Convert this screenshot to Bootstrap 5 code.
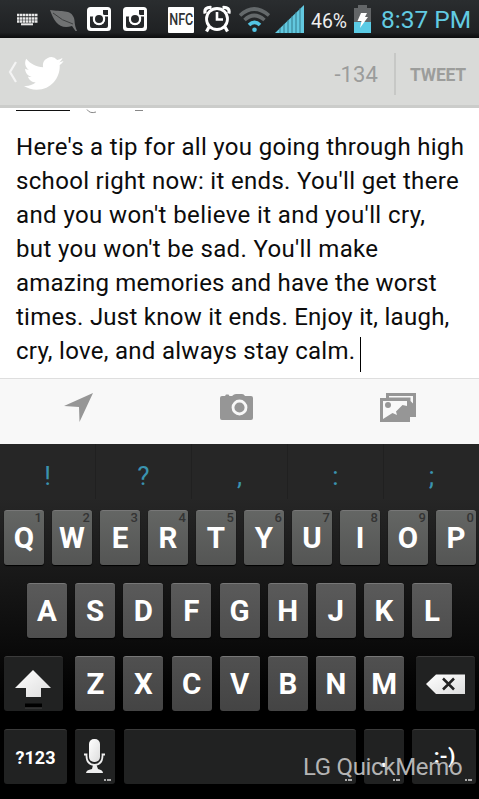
<!DOCTYPE html>
<html lang="en">
<head>
<meta charset="utf-8">
<meta name="viewport" content="width=device-width, initial-scale=1">
<title>Compose Tweet</title>
<link href="https://cdn.jsdelivr.net/npm/bootstrap@5.3.0/dist/css/bootstrap.min.css" rel="stylesheet">
<style>
body{font-family:Roboto,"Noto Sans",sans-serif;background:#fff}
svg{display:block;flex:none}
.phone{width:479px;height:799px}
.status{height:38px;background:linear-gradient(#2a2d2f,#1f2123 85%,#0b0c0d);padding-left:16px}
.ic-leaf{margin-left:11px}.ic-insta{margin-left:9px}.ic-insta2{margin-left:12px}
.nfc{width:26px;height:26px;margin-left:21px;background:#fff;color:#303234;border-radius:1px;font-size:17px;font-weight:500;margin-top:1px}
.nfc span{transform:scaleX(.74)}
.ic-alarm{margin-left:9px}.ic-wifi{margin-left:8px}.ic-signal{margin-left:5px}
.pct{width:36px;margin-left:7px;font-size:20px;line-height:38px;color:#eee;margin-top:3px}
.pct span{display:inline-block;transform-origin:0 50%;transform:scaleX(.97)}
.ic-batt{margin-left:7px}
.clock{margin-left:10px;font-size:24.5px;line-height:38px;color:#62cbe2;margin-top:2px}
.appbar{height:70px;background:#d9dad8;border-bottom:3px solid #cbccca}
.back{margin-left:7px}.bird{margin-left:6px}
.count{font-size:22px;color:#9b9c9b;margin-top:6px;letter-spacing:.1px}
.rule{width:2px;height:42px;background:#c7c8c6;margin:4px 14px 0 16px}
.tweet{font-size:17.5px;font-weight:700;color:#9c9d9b;margin:7px 13px 0 0;width:56px;letter-spacing:-.2px}
.compose{height:270px;padding:0 0 0 16px;overflow:hidden}
.reply{height:21.5px}
.msg{font-size:24px;line-height:34px;color:#0c0c0c;white-space:nowrap}
.msg div{height:34px}
.l1{letter-spacing:.31px}.l2{letter-spacing:.32px}.l3{letter-spacing:.4px}.l4{letter-spacing:.35px}.l5{letter-spacing:.22px}.l6{letter-spacing:.25px}.l7{letter-spacing:.28px}
.caret{display:inline-block;width:1px;height:35px;background:#000;margin-left:5px;vertical-align:-13px}
.tools{height:66px;background:#f8f8f8;border-top:1px solid #dedede;padding-top:13px}
.ic-loc{margin-left:64px}.ic-cam{margin-left:127px}.ic-pic{margin-left:127px}
.keyboard{height:355px;background:linear-gradient(#262626 0,#262626 55px,#000 260px)}
.suggest{height:55px;font-size:26px;line-height:55px;color:#3a93af}
.suggest div{width:96px;text-align:center;flex:none;padding:5px 1px 0 0;box-shadow:inset -1px 0 #202020}
.krow{height:55px;margin-bottom:18px;gap:8px}
.first{margin-top:11px}
.r1,.r4{padding-left:4px}.r2{padding-left:27px;gap:8.130px}.r3 .letters{gap:8.150px;padding-left:.5px}
.key{position:relative;width:40px;height:55px;border-radius:3px;color:#fff;font-weight:700;font-size:29.5px;background:#555;border-top:1px solid #777;flex:none;padding-top:1px;box-shadow:0 1px 1px #000}
.r1 .key{background:linear-gradient(#646664,#545554)}
.r2 .key{background:linear-gradient(#5a5a5a,#4e4e4e)}
.r3 .key{background:linear-gradient(#505050,#444)}
.r3 .dark,.r4 .key{background:#212222;border-top-color:#3b3b3b}
.r2 .key,.r3 .letters .key{padding-top:0}
.key small{position:absolute;top:0;right:2px;font-size:13px;line-height:14px;font-weight:500;color:#343434}
.r4 .k-num{font-size:18px}
.k-wide{width:59px}.k-num{width:63px}.k-space{width:232px}.k-smile{width:64px}
.r4 .k-smile{font-size:21px;padding:0 0 0 1px}
.mic{margin-right:1px}
.dots::after{content:"";position:absolute;right:4px;bottom:3px;width:7px;height:2px;background:repeating-linear-gradient(90deg,#aaa 0 2px,transparent 2px 2.5px)}
.memo{position:absolute;left:303px;top:751px;font-size:24px;line-height:32px;color:#b4b4b4;white-space:nowrap;letter-spacing:-.32px}
</style>
</head>
<body>
<main class="phone position-relative overflow-hidden">
<header class="status d-flex align-items-center">
<svg width="23" height="38"><path d="M1 15H22M1 18.500H22M1 21.500H22" stroke="#e8e8e8" stroke-width="2.300" stroke-dasharray="2.500 .5"/><path d="M5 24.300H17" stroke="#e8e8e8" stroke-width="2"/></svg>
<svg class="ic-leaf" width="28" height="38"><path d="M0 10C11 12 21 9 24 18C25 21 24 24 27 31L25.500 31L22 26C10 30 4 22 0 10Z" fill="#707273"/><path d="M3 13Q12 21 23 24" fill="none" stroke="#3d3f40"/></svg>
<svg class="ic-insta" width="24" height="38"><rect y="7" width="24" height="24" rx="3.500" fill="#fff"/><rect x="16" y="10" width="5" height="5" fill="#26282a"/><path d="M3 16.500H6.500A6 6 0 1 0 17.500 16.500H21V26a2 2 0 0 1-2 2H5a2 2 0 0 1-2-2Z" fill="#26282a"/><circle cx="12" cy="19" r="6.200" fill="#fff"/><circle cx="12" cy="19" r="4" fill="#26282a"/></svg>
<svg class="ic-insta2" width="24" height="38"><rect y="7" width="24" height="24" rx="3.500" fill="#fff"/><rect x="16" y="10" width="5" height="5" fill="#26282a"/><path d="M3 16.500H6.500A6 6 0 1 0 17.500 16.500H21V26a2 2 0 0 1-2 2H5a2 2 0 0 1-2-2Z" fill="#26282a"/><circle cx="12" cy="19" r="6.200" fill="#fff"/><circle cx="12" cy="19" r="4" fill="#26282a"/></svg>
<div class="nfc d-flex align-items-center justify-content-center"><span>NFC</span></div>
<svg class="ic-alarm" width="28" height="38" fill="none" stroke="#fff"><circle cx="14" cy="19" r="10.500" stroke-width="2.800"/><path d="M14 12V19.500H20" stroke-width="2.600"/><path d="M2.200 13.500Q.5 7 8.500 7.500M25.800 13.500Q27.500 7 19.500 7.500" stroke-width="3.200"/><path d="M6 27L3.500 31.500M22 27L24.500 31.500" stroke-width="3.200"/></svg>
<svg class="ic-wifi" width="31" height="38" fill="none"><path d="M1 15.500Q15 2.500 30 15.500" stroke="#64696b" stroke-width="3.600"/><path d="M5.500 20Q15 11 25.500 20" stroke="#64696b" stroke-width="3.600"/><path d="M10 25Q15.500 19.500 21 25" stroke="#52c4e4" stroke-width="3.600"/><circle cx="15.500" cy="29.700" r="2.300" fill="#52c4e4"/></svg>
<svg class="ic-signal" width="29" height="38" fill="#62c8df"><path d="M0 33L29 5V33Z"/><path d="M5 28V33M9 24V33M13 20V33M17 16V33M21 12V33M25 8V33" stroke="#2f7285" stroke-width=".9"/></svg>
<div class="pct"><span>46%</span></div>
<svg class="ic-batt" width="17" height="38"><path d="M4 5H13V8H17V22H0V8H4Z" fill="#636668"/><path d="M0 22H17V33H0Z" fill="#5bcbe5"/><path d="M7 13H13L11 17H14L6 28L7.500 21H3.500Z" fill="#fff"/></svg>
<div class="clock">8:37 PM</div>
</header>

<nav class="appbar d-flex align-items-center">
<svg class="back" width="11" height="22"><path d="M9 1L3 11L9 21" fill="none" stroke="#f4f4f4" stroke-width="2.200"/></svg>
<svg class="bird mt-1" width="40" height="34" viewBox="0 0 39 33"><path fill="#fff" d="M38.500 3.900c-1.300.7-2.900 1.100-4.500 1.300 1.600-1 2.900-2.500 3.500-4.400-1.600.9-3.300 1.600-5.100 2A8 8 0 0 0 18.700 10C12 9.700 6.100 6.500 2.200 1.600c-2.100 3.700-1.100 8.300 2.500 10.700-1.300 0-2.600-.4-3.600-1 0 3.900 2.600 7 6.400 7.900-1.200.3-2.400.3-3.600.1 1 3.200 3.900 5.500 7.500 5.600A16.100 16.100 0 0 1 0 28.200a22.700 22.700 0 0 0 12.300 3.600c15.200 0 23.200-12.800 22.500-24 1.500-1 2.800-2.400 3.700-3.900Z"/></svg>
<div class="count ms-auto">-134</div><div class="rule"></div><div class="tweet">TWEET</div>
</nav>

<section class="compose">
<div class="reply"><svg width="150" height="6"><path d="M0 2.500H54" stroke="#111"/><path d="M71 1.500Q74 6 80 4M119 2.500H127" fill="none" stroke="#888"/></svg></div>
<div class="msg">
<div class="l1">Here's a tip for all you going through high</div>
<div class="l2">school right now: it ends. You'll get there</div>
<div class="l3">and you won't believe it and you'll cry,</div>
<div class="l4">but you won't be sad. You'll make</div>
<div class="l5">amazing memories and have the worst</div>
<div class="l6">times. Just know it ends. Enjoy it, laugh,</div>
<div class="l7">cry, love, and always stay calm.<span class="caret"></span></div>
</div>
</section>

<section class="tools d-flex">
<svg class="ic-loc" width="29" height="30"><path d="M29 1L15.500 30L15 15L0 14Z" fill="#969696"/></svg>
<svg class="ic-cam" width="33" height="30"><path d="M2 4H5L6 2.500H8.500L9.500 4H12Q14 2 16 2H22Q24 2 25 4H31Q33 4 33 6V26Q33 28 31 28H2Q0 28 0 26V6Q0 4 2 4Z" fill="#969696"/><circle cx="19.500" cy="15.500" r="6.500" fill="none" stroke="#f8f8f8" stroke-width="2.800"/></svg>
<svg class="ic-pic" width="36" height="31"><path d="M6 1H36V25H30V30H0V6H6Z" fill="#969696"/><path d="M9 5.500V4H33V11.500L30.500 9V5.500Z" fill="#f8f8f8"/><path d="M3 9H27V14L22.500 13L16 19.500L17 23L12.500 21L3 27Z" fill="#f8f8f8"/><circle cx="8" cy="13" r="3" fill="#969696"/></svg>
</section>

<section class="keyboard">
<div class="suggest d-flex"><div>!</div><div>?</div><div>,</div><div>:</div><div>;</div></div>
<div class="krow r1 first d-flex">
<div class="key d-flex align-items-center justify-content-center">Q<small>1</small></div><div class="key d-flex align-items-center justify-content-center">W<small>2</small></div><div class="key d-flex align-items-center justify-content-center">E<small>3</small></div><div class="key d-flex align-items-center justify-content-center">R<small>4</small></div><div class="key d-flex align-items-center justify-content-center">T<small>5</small></div><div class="key d-flex align-items-center justify-content-center">Y<small>6</small></div><div class="key d-flex align-items-center justify-content-center">U<small>7</small></div><div class="key d-flex align-items-center justify-content-center">I<small>8</small></div><div class="key d-flex align-items-center justify-content-center">O<small>9</small></div><div class="key d-flex align-items-center justify-content-center">P<small>0</small></div>
</div>
<div class="krow r2 d-flex">
<div class="key d-flex align-items-center justify-content-center">A</div><div class="key d-flex align-items-center justify-content-center">S</div><div class="key d-flex align-items-center justify-content-center">D</div><div class="key d-flex align-items-center justify-content-center">F</div><div class="key d-flex align-items-center justify-content-center">G</div><div class="key d-flex align-items-center justify-content-center">H</div><div class="key d-flex align-items-center justify-content-center">J</div><div class="key d-flex align-items-center justify-content-center">K</div><div class="key d-flex align-items-center justify-content-center">L</div>
</div>
<div class="krow r3 d-flex justify-content-between px-1">
<div class="key dark k-wide"><svg width="59" height="53"><defs><linearGradient id="g" x2="1" y2="1"><stop stop-color="#fff"/><stop offset="1" stop-color="#ddd"/></linearGradient></defs><path d="M29 12L47 30H37V39H22V30H11Z" fill="url(#g)"/><path d="M21 47.500H38" stroke="#000" stroke-width="4"/><path d="M21 50H38" stroke="#444"/></svg></div>
<div class="letters d-flex"><div class="key d-flex align-items-center justify-content-center">Z</div><div class="key d-flex align-items-center justify-content-center">X</div><div class="key d-flex align-items-center justify-content-center">C</div><div class="key d-flex align-items-center justify-content-center">V</div><div class="key d-flex align-items-center justify-content-center">B</div><div class="key d-flex align-items-center justify-content-center">N</div><div class="key d-flex align-items-center justify-content-center">M</div></div>
<div class="key dark k-wide"><svg width="59" height="53"><path d="M10 26L20 16.500H49V36H20Z" fill="url(#g)"/><path d="M27 20.500L38 31.500M38 20.500L27 31.500" stroke="#222" stroke-width="2.500"/></svg></div>
</div>
<div class="krow r4 d-flex">
<div class="key k-num d-flex align-items-center justify-content-center">?123</div>
<div class="key dots mic"><svg width="40" height="50"><rect x="14" y="8" width="11" height="23" rx="5" fill="url(#g)"/><path d="M9 23.500H11.500Q11 33.500 19.500 34Q28 33.500 27.500 23.500H30" fill="none" stroke="#eee" stroke-width="1.800"/><path d="M18 34H21.500L23 38Q28 39 28 42H11Q11 39 17 38Z" fill="#eee"/></svg></div>
<div class="key k-space dots"></div>
<div class="key dots d-flex align-items-center justify-content-center">.</div>
<div class="key k-smile dots d-flex align-items-center justify-content-center">:-)</div>
</div>
</section>
<div class="memo">LG QuickMemo</div>
</main>
<script src="https://cdn.jsdelivr.net/npm/bootstrap@5.3.0/dist/js/bootstrap.bundle.min.js"></script>
</body>
</html>
